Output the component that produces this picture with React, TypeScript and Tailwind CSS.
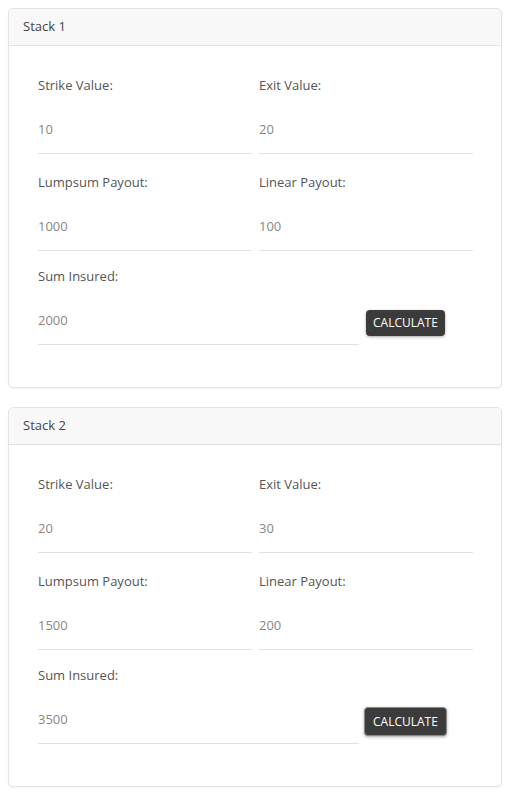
import React from 'react';

type Stack = {
  title: string;
  strike: string;
  exit: string;
  lumpsum: string;
  linear: string;
  sumInsured: string;
  active?: boolean;
};

const stacks: Stack[] = [
  { title: 'Stack 1', strike: '10', exit: '20', lumpsum: '1000', linear: '100', sumInsured: '2000' },
  { title: 'Stack 2', strike: '20', exit: '30', lumpsum: '1500', linear: '200', sumInsured: '3500', active: true },
];

function Field({ label, value }: { label: string; value: string }) {
  return (
    <div className="flex flex-col">
      <label className="text-[13px] leading-[18px] text-[#555]">{label}</label>
      <div className="mt-[18px] h-[42px] pt-[8px] border-b border-[#e2e2e2] text-[13px] leading-[18px] text-[#888]">
        {value}
      </div>
    </div>
  );
}

function StackCard({ stack }: { stack: Stack }) {
  return (
    <div className="border border-[#e3e3e3] rounded-[5px] bg-white shadow-[0_1px_2px_rgba(0,0,0,0.05)] overflow-hidden">
      <div className="h-[37px] bg-[#f8f8f8] border-b border-[#e3e3e3] px-[14px] flex items-center text-[13px] text-[#444]">
        {stack.title}
      </div>

      <div className="pl-[29px] pr-[28px] pt-[30px] pb-[42px]">
        <div className="grid grid-cols-2 gap-x-[7px]">
          <Field label="Strike Value:" value={stack.strike} />
          <Field label="Exit Value:" value={stack.exit} />
        </div>
        <div className="grid grid-cols-2 gap-x-[7px] mt-[19px]">
          <Field label="Lumpsum Payout:" value={stack.lumpsum} />
          <Field label="Linear Payout:" value={stack.linear} />
        </div>
        <div className="flex items-end gap-[7px] mt-[16px]">
          <div className="w-[321px]">
            <Field label="Sum Insured:" value={stack.sumInsured} />
          </div>
          {stack.active ? (
            <button className="-ml-[2px] mb-[8px] h-[29px] px-[8px] rounded-[4px] bg-[#3b3b3b] border border-[#8a8a8a] text-white text-[12px] shadow-[0_1px_3px_rgba(0,0,0,0.35)]">
              CALCULATE
            </button>
          ) : (
            <button className="mb-[9px] h-[26px] px-[7px] rounded-[4px] bg-[#3b3b3b] text-white text-[12px] shadow-[0_1px_3px_rgba(0,0,0,0.35)]">
              CALCULATE
            </button>
          )}
        </div>
      </div>
    </div>
  );
}

export default function App() {
  return (
    <div className="min-h-screen bg-white pl-[8px] pr-[10px] pt-[8px] pb-[12px] flex flex-col gap-[19px] font-['Open_Sans',sans-serif]">
      {stacks.map(s => (
        <StackCard key={s.title} stack={s} />
      ))}
    </div>
  );
}
